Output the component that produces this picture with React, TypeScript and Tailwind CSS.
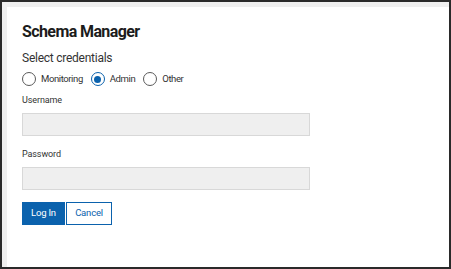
import React from "react";

function Radio({ label, checked }: { label: string; checked?: boolean }) {
  return (
    <label className="flex items-center gap-[5px]">
      <span
        className={
          "flex h-[14px] w-[14px] items-center justify-center rounded-full border-[1.5px] bg-white " +
          (checked ? "border-[#0b62ad]" : "border-[#5a5a5a]")
        }
      >
        {checked && <span className="h-[7px] w-[7px] rounded-full bg-[#0b62ad]" />}
      </span>
      <span className="text-[9.5px] leading-[12px] tracking-[-0.4px] text-[#333]">{label}</span>
    </label>
  );
}

export default function App() {
  return (
    <div
      className="h-[269px] w-[451px] border-2 border-[#2a2a2a] bg-[#efefef] pl-[5px] pt-[5px]"
      style={{ fontFamily: "Roboto, 'Liberation Sans', sans-serif" }}
    >
      <div className="h-full w-full bg-white pl-[15px] pt-[15px]">
        <h1 className="text-[16px] font-bold leading-[20px] tracking-[-0.6px] text-[#1c1c1c]">Schema Manager</h1>
        <div className="mt-[9px] text-[12px] leading-[14px] tracking-[-0.25px] text-[#333]">Select credentials</div>
        <div className="mt-[7px] flex h-[14px] items-center gap-[8px]">
          <Radio label="Monitoring" />
          <Radio label="Admin" checked />
          <Radio label="Other" />
        </div>
        <div className="mt-[9px] text-[9px] leading-[11px] tracking-[-0.1px] text-[#333]">Username</div>
        <div className="mt-[7px] h-[23px] w-[288px] border border-[#d8d8d8] bg-[#efefef]" />
        <div className="mt-[13px] text-[9px] leading-[11px] tracking-[-0.1px] text-[#333]">Password</div>
        <div className="mt-[7px] h-[23px] w-[288px] border border-[#d8d8d8] bg-[#efefef]" />
        <div className="mt-[12px] flex">
          <button className="h-[23px] w-[43px] bg-[#0b62ad] text-[9.5px] tracking-[-0.2px] text-white">Log In</button>
          <button className="ml-[1px] h-[23px] w-[46px] border border-[#0b62ad] bg-white text-[9.5px] tracking-[-0.2px] text-[#0b62ad]">
            Cancel
          </button>
        </div>
      </div>
    </div>
  );
}
